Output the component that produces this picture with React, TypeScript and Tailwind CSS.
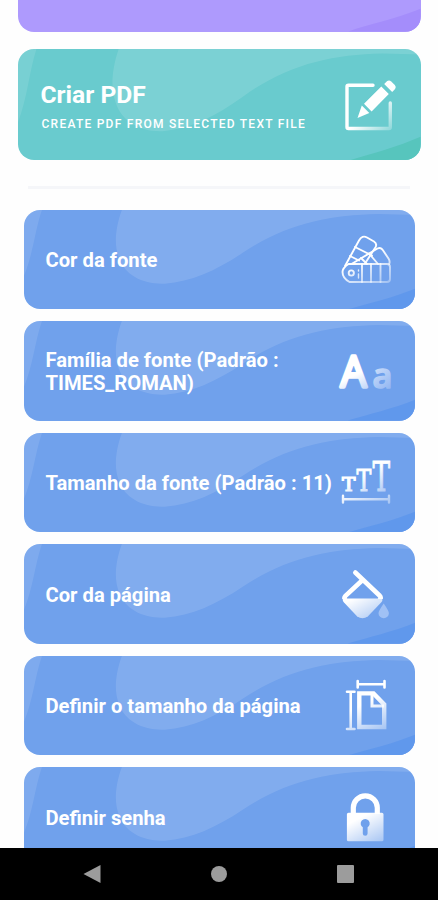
import type { ReactNode } from 'react';

const stroke = { fill: 'none', strokeLinecap: 'round', strokeLinejoin: 'round' } as const;

function Icon({ id, children }: { id: string; children: ReactNode }) {
  return (
    <svg viewBox="0 0 60 60" className="size-[60px] shrink-0 overflow-visible">
      <defs>
        <linearGradient id={id} gradientUnits="userSpaceOnUse" x1="20" y1="16" x2="44" y2="62">
          <stop offset="0.3" stopColor="#fff" />
          <stop offset="1" stopColor="#fff" stopOpacity="0.3" />
        </linearGradient>
      </defs>
      {children}
    </svg>
  );
}

function EditIcon() {
  return (
    <Icon id="edit">
      <defs>
        <linearGradient id="editBox" gradientUnits="userSpaceOnUse" x1="24" y1="30" x2="50" y2="56">
          <stop offset="0.2" stopColor="#fff" />
          <stop offset="1" stopColor="#fff" stopOpacity="0.25" />
        </linearGradient>
      </defs>
      <path d="M33 10.2H8.5a1.5 1.5 0 0 0-1.5 1.5V52a1.5 1.5 0 0 0 1.5 1.5h40.3a1.5 1.5 0 0 0 1.5-1.5V28" stroke="url(#editBox)" strokeWidth="3.4" {...stroke} />
      <path d="M24 28.7 41.3 11.4 48.8 18.9 31.6 36.4ZM21.8 30.4 29.3 38 17.5 43Z" fill="#fff" />
      <path d="m44.2 9 3-3q2-1.4 4 .4l3.6 3.7q1.8 2 .3 4L52.2 17Z" fill="#fff" />
    </Icon>
  );
}

function PaletteIcon() {
  return (
    <Icon id="palette">
      <g stroke="url(#palette)" strokeWidth="1.9" {...stroke}>
        <path d="M13.5 35h38.5q3 0 3 3v12q0 3-3 3H14.5q-7-4-7-10 0-4 6-8Z" />
        <path d="M27 35v18M36 35v18M45.5 35v18" />
        <path d="M10 37 24 11.5q3.2-5.8 8-3l7 4q3.4 2.2 1.5 5.8L30 34.5" />
        <path d="m20 18 17 8.5M15 27l9 4.5" />
        <path d="m16.5 35 26-15.5q3.5-1.7 5.3 1.5l6 9q1.4 2.5.4 5" />
        <path d="m34 24.5 9 10.5M26 29l6 6" />
        <circle cx="16.3" cy="44" r="2.6" />
        <path d="M23.5 41v1M23.5 45v4" strokeWidth="1.4" />
      </g>
    </Icon>
  );
}

function FontFamilyIcon() {
  return (
    <Icon id="family">
      <defs>
        <linearGradient id="familyBig" gradientUnits="userSpaceOnUse" x1="12" y1="20" x2="30" y2="56">
          <stop offset="0.4" stopColor="#fff" />
          <stop offset="1" stopColor="#abc8f6" />
        </linearGradient>
        <linearGradient id="familySmall" gradientUnits="userSpaceOnUse" x1="38" y1="26" x2="57" y2="48">
          <stop offset="0" stopColor="#cfdffa" />
          <stop offset="1" stopColor="#8fb5f2" />
        </linearGradient>
      </defs>
      <text x="5.5" y="46" fill="url(#familyBig)" stroke="url(#familyBig)" strokeWidth="3.4" strokeLinejoin="round" textLength="26" lengthAdjust="spacingAndGlyphs" className="font-['Open_Sans'] text-[44px] font-normal">A</text>
      <text x="37.5" y="46.5" fill="url(#familySmall)" stroke="url(#familySmall)" strokeWidth="1.6" strokeLinejoin="round" textLength="20" lengthAdjust="spacingAndGlyphs" className="font-['Open_Sans'] text-[35px] font-semibold">a</text>
    </Icon>
  );
}

function FontSizeIcon() {
  return (
    <Icon id="size">
      <defs>
        <linearGradient id="sizeLetters" gradientUnits="userSpaceOnUse" x1="20" y1="14" x2="42" y2="52">
          <stop offset="0.3" stopColor="#fff" />
          <stop offset="1" stopColor="#9abcf3" />
        </linearGradient>
      </defs>
      <g fill="url(#sizeLetters)" stroke="url(#sizeLetters)" className="font-['DejaVu_Serif']">
        <text x="7" y="39.2" strokeWidth="1.2" textLength="13.4" lengthAdjust="spacingAndGlyphs" className="text-[18.5px]">T</text>
        <text x="21.4" y="39.2" strokeWidth="1" textLength="14.8" lengthAdjust="spacingAndGlyphs" className="text-[29.5px]">T</text>
        <text x="37.4" y="39.2" strokeWidth="0.8" textLength="17.6" lengthAdjust="spacingAndGlyphs" className="text-[41px]">T</text>
      </g>
      <path d="M8 47.2H54M8 43.8v6.8M54 43.8v6.8" stroke="url(#size)" strokeWidth="2.4" {...stroke} />
    </Icon>
  );
}

function BucketIcon() {
  return (
    <Icon id="bucket">
      <mask id="bucketTop"><path d="M0 0h60v35H0Z" fill="#fff" /></mask>
      <path d="M20.3 8.5 44.5 31.5q2.5 2.5 0 5L31 51.5q-3.5 3-7 0L10.5 37q-2.2-2.7 0-5.2L26.5 17" stroke="#fff" strokeWidth="4.6" fill="none" strokeLinecap="round" mask="url(#bucketTop)" />
      <path d="M7.6 34.5H47.4q.4 2-1.3 4L33 52.3q-5.5 4-11 0L9 38.5q-1.6-2-1.4-4Z" fill="url(#bucket)" />
      <path d="M48.7 39.5q-5.2 7.5-5.2 9.7a5.2 5 0 0 0 10.4 0q0-2.2-5.2-9.7Z" fill="#a0c1f5" />
    </Icon>
  );
}

function PageSizeIcon() {
  return (
    <Icon id="page">
      <path d="M22.7 9.2H49.5M22.7 6v6.5M49.5 6v6.5M15.7 16.8V54M12 16.8h7.5M12 54h7.5" stroke="url(#page)" strokeWidth="2.6" {...stroke} />
      <path d="M24.3 18.4H38.5L49.2 29.5V52H24.3Z" stroke="url(#page)" strokeWidth="4.4" fill="none" />
      <path d="M37 19v12h12" stroke="url(#page)" strokeWidth="3" fill="none" />
    </Icon>
  );
}

function LockIcon() {
  return (
    <Icon id="lock">
      <path d="M18.3 27v-6.2a12 12 0 0 1 24 0V27" stroke="#fff" strokeWidth="5.2" fill="none" />
      <path fillRule="evenodd" d="M13.5 25.7h33.4a1.6 1.6 0 0 1 1.6 1.6V52.7a1.6 1.6 0 0 1-1.6 1.6H13.5a1.6 1.6 0 0 1-1.6-1.6V27.3a1.6 1.6 0 0 1 1.6-1.6ZM27.8 40.3V46.4a2.4 2.4 0 0 0 4.8 0V40.3a4.5 4.5 0 1 0-4.8 0Z" fill="url(#lock)" />
    </Icon>
  );
}

// Decorative waves behind the content of a card
function Waves({ corner }: { corner: string }) {
  return (
    <svg viewBox="0 0 392 100" preserveAspectRatio="none" className="absolute inset-0 size-full">
      <path d="M0 0H18C11 20 9 45 0 66Z" fill="#fff" fillOpacity="0.1" />
      <path d="M98 0C90 22 91 38 95 48C101 66 120 75 141 74C168 72 192 61 219 43C262 14 305 5 355 4L392 5V0Z" fill="#fff" fillOpacity="0.12" />
      <path d="M324 100C345 94 370 88 392 79V100Z" fill={corner} />
    </svg>
  );
}

const options = [
  { label: 'Cor da fonte', icon: <PaletteIcon /> },
  { label: 'Família de fonte (Padrão : TIMES_ROMAN)', icon: <FontFamilyIcon /> },
  { label: 'Tamanho da fonte (Padrão : 11)', icon: <FontSizeIcon /> },
  { label: 'Cor da página', icon: <BucketIcon /> },
  { label: 'Definir o tamanho da página', icon: <PageSizeIcon /> },
  { label: 'Definir senha', icon: <LockIcon /> },
];

export default function App() {
  return (
    <div className="flex h-[900px] w-[438px] flex-col overflow-hidden bg-[#fefefe] font-['Roboto',sans-serif] text-white">
      <main className="h-[847.5px] shrink-0 overflow-hidden">
        <div className="relative mr-[17.5px] ml-[18px] h-[31.5px] overflow-hidden rounded-b-2xl bg-[#ae9afd]">
          <svg viewBox="0 0 402 32" preserveAspectRatio="none" className="absolute inset-0 size-full">
            <path d="M330 32C350 25 378 19 402 9V32Z" fill="#a48dfb" />
          </svg>
        </div>

        <div className="relative mt-[17.5px] mr-[17.5px] ml-[18px] flex h-[111px] items-center justify-between overflow-hidden rounded-2xl bg-[#69cbce] pr-[21px] pl-[22.5px]">
          <Waves corner="#57c5bd" />
          <div className="relative pt-1">
            <h1 className="text-[24.6px] leading-7 font-bold">Criar PDF</h1>
            <p className="mt-[7px] ml-px text-[12px] leading-4 font-medium tracking-[1.25px] whitespace-nowrap">CREATE PDF FROM SELECTED TEXT FILE</p>
          </div>
          <div className="relative"><EditIcon /></div>
        </div>

        <div className="mx-7 mt-[25.5px] h-[3px] bg-[#f5f6f9]" />

        <div className="mt-[21px] mr-[23px] ml-[23.5px] flex flex-col gap-3">
          {options.map((option) => (
            <div key={option.label} className="relative flex h-[99.5px] shrink-0 items-center justify-between overflow-hidden rounded-2xl bg-[#70a1ec] pr-5 pl-[22px]">
              <Waves corner="#6098ec" />
              <span className="relative w-[290px] pt-[3px] text-[20.2px] leading-[23.5px] font-bold">{option.label}</span>
              <div className="relative">{option.icon}</div>
            </div>
          ))}
        </div>
      </main>

      <nav className="flex h-[52.5px] shrink-0 items-center justify-between bg-black pr-[84px] pl-[83px]">
        <svg viewBox="0 0 18 18" className="size-[18px]"><path d="M.5 9 17.5 0v18Z" fill="#9c9c9c" /></svg>
        <div className="size-4 rounded-full bg-[#9c9c9c]" />
        <div className="size-[17.5px] rounded-[1px] bg-[#9c9c9c]" />
      </nav>
    </div>
  );
}
